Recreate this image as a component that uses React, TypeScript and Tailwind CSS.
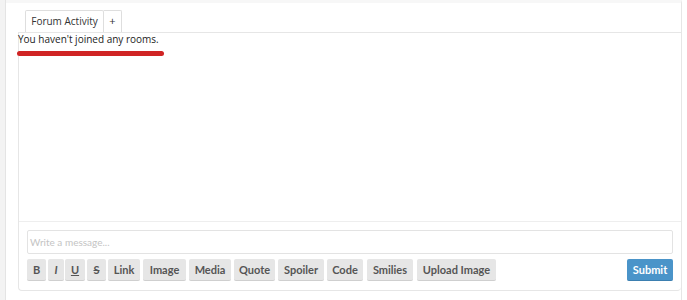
import React from 'react';

// widths / spacing read off the screenshot
const tools = [
  { label: 'B', cls: 'w-[19px]' },
  { label: 'I', cls: 'w-[16px] ml-[2px] italic' },
  { label: 'U', cls: 'w-[20px] ml-[1px] underline' },
  { label: 'S', cls: 'w-[19px] ml-[2px] line-through' },
  { label: 'Link', cls: 'w-[32px] ml-[2px]' },
  { label: 'Image', cls: 'w-[43px] ml-[3px]' },
  { label: 'Media', cls: 'w-[42px] ml-[3px]' },
  { label: 'Quote', cls: 'w-[41px] ml-[3px]' },
  { label: 'Spoiler', cls: 'w-[46px] ml-[3px]' },
  { label: 'Code', cls: 'w-[36px] ml-[3px]' },
  { label: 'Smilies', cls: 'w-[46px] ml-[4px]' },
  { label: 'Upload Image', cls: 'w-[79px] ml-[4px]' },
];

export default function App() {
  return (
    <div className="flex w-[687px] h-[300px] bg-white font-['Open_Sans',sans-serif]">
      {/* left gutter */}
      <div className="w-[6px] shrink-0 bg-[#f3f3f3] border-r border-[#e4e4e4]" />

      <div className="flex-1 flex flex-col border-r border-[#e6e6e6] border-t-[3px] border-t-[#f7f7f7]">
        {/* tabs */}
        <div className="flex pl-[19px] pt-[7px]">
          <div className="h-[22px] w-[79px] flex items-center justify-center border border-b-0 border-[#dedede] rounded-t-[2px] text-[10px] text-[#333]">
            Forum Activity
          </div>
          <div className="h-[22px] w-[18px] flex items-center justify-center border border-l-0 border-b-0 border-[#dedede] rounded-tr-[2px] text-[11px] text-[#333]">
            +
          </div>
        </div>

        {/* chat panel */}
        <div className="ml-[12px] h-[259px] flex flex-col border border-r-0 border-[#e6e6e6] rounded-b-[4px]">
          <div className="relative h-[189px] border-b border-[#eeeeee]">
            <p className="text-[10px] leading-[12px] text-[#222] -ml-[1px]">You haven't joined any rooms.</p>
            <div className="absolute left-[-2px] top-[18px] w-[147px] h-[5px] rounded-full bg-[#d02424]" />
          </div>

          <div className="px-[8px] pt-[8px]">
            <div className="h-[24px] border border-[#e3e3e3] rounded-[2px] flex items-center px-[2px] text-[10px] text-[#c4c4c4] font-['Lato',sans-serif]">
              Write a message...
            </div>
            <div className="flex items-center mt-[5px] font-['Lato',sans-serif]">
              {tools.map((t) => (
                <button
                  key={t.label}
                  className={`h-[22px] rounded-[2px] bg-[#e6e6e6] border-b border-[#cfcfcf] text-[11px] font-bold text-[#555] leading-none ${t.cls}`}
                >
                  {t.label}
                </button>
              ))}
              <button className="ml-auto w-[46px] h-[22px] rounded-[2px] bg-[#4a94c9] border-b border-[#3b7fb0] text-[11px] font-bold text-white leading-none">
                Submit
              </button>
            </div>
          </div>
        </div>
      </div>
      <div className="w-[5px] shrink-0 bg-white" />
    </div>
  );
}
